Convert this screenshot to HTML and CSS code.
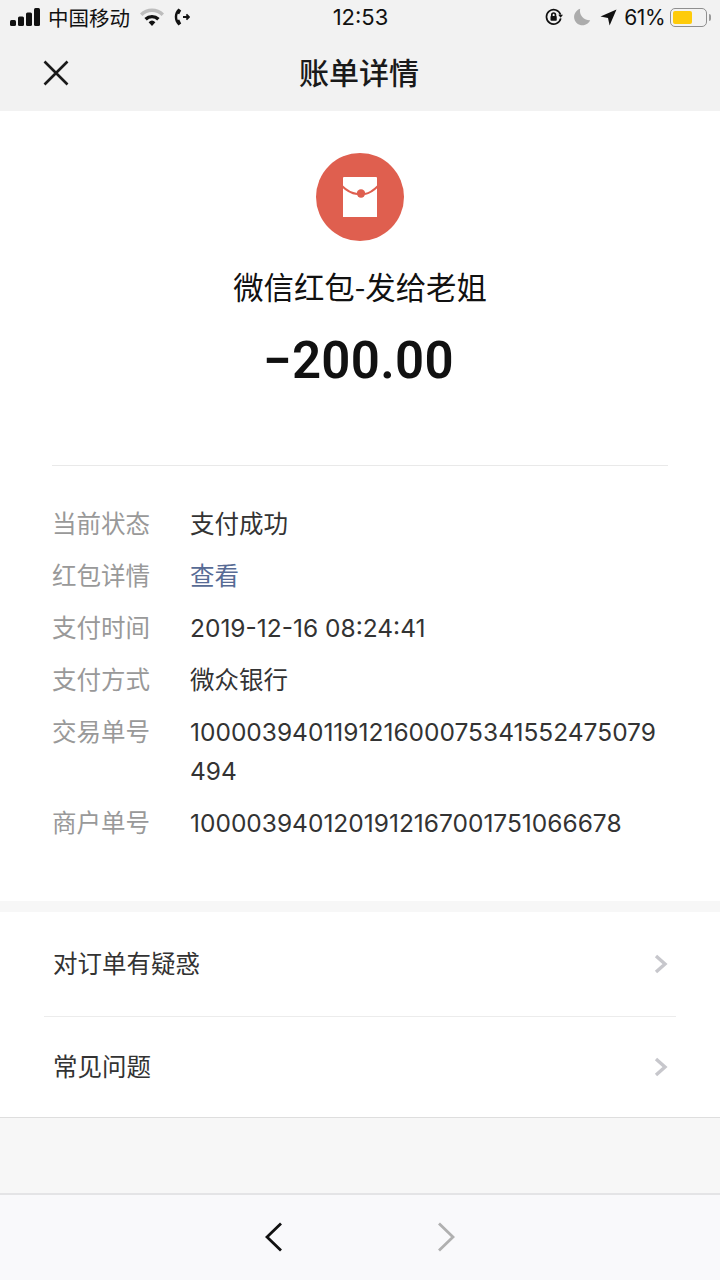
FILE: index.html
```html
<!DOCTYPE html>
<html lang="zh-CN">
<head>
    <meta charset="UTF-8">
    <meta name="viewport" content="width=device-width, initial-scale=1.0">
    <title>账单详情</title>
    <link rel="stylesheet" href="styles.css">
</head>
<body>
    <div class="page">
        <header class="top">
            <div class="status">
                <div class="status-side">
                    <svg class="signal" width="30" height="18" viewBox="0 0 30 18">
                        <rect x="0" y="12" width="6" height="6" rx="1.5"/>
                        <rect x="8" y="8.5" width="6" height="9.5" rx="1.5"/>
                        <rect x="16" y="4.5" width="6" height="13.5" rx="1.5"/>
                        <rect x="24" y="0" width="6" height="18" rx="1.5"/>
                    </svg>
                    <span class="carrier">中国移动</span>
                    <svg class="wifi" width="26" height="20" viewBox="0 0 26 20">
                        <path d="M1 6.5 A17 17 0 0 1 25 6.5 L22.6 9 A13.6 13.6 0 0 0 3.4 9 Z" fill="#bdbdbd"/>
                        <path d="M5.4 11 A11 11 0 0 1 20.6 11 L18.2 13.4 A7.6 7.6 0 0 0 7.8 13.4 Z"/>
                        <path d="M9.6 15.2 A5 5 0 0 1 16.4 15.2 L13 19 Z"/>
                    </svg>
                    <svg class="call" width="16" height="18" viewBox="0 0 16 18">
                        <path d="M4.5 0.5 C-0.5 4.5 -0.5 13 4.5 17.5 L7.2 15.4 L5.2 11.6 L3.8 12 C3 10 3 7.5 3.8 5.8 L5.2 6.2 L7.2 2.6 Z"/>
                        <path class="call-arrow" d="M9 9 H15 M12.4 6.4 L15 9 L12.4 11.6"/>
                    </svg>
                </div>
                <span class="clock">12:53</span>
                <div class="status-side status-right">
                    <svg width="18" height="18" viewBox="0 0 19 19">
                        <path class="lock-ring" d="M16.4 7 A7.6 7.6 0 1 0 16.6 11"/>
                        <path d="M14 7 H19 L16.5 10.2 Z"/>
                        <rect x="5.8" y="8.4" width="6.6" height="5" rx="0.8"/>
                        <path class="lock-loop" d="M7.2 8.6 V7.2 A1.9 1.9 0 0 1 11 7.2 V8.6"/>
                    </svg>
                    <svg class="moon" width="18" height="18" viewBox="0 0 18 18">
                        <path d="M7.2 0.8 A8.4 8.4 0 1 0 17.2 12.2 A9.4 9.4 0 0 1 7.2 0.8 Z" fill="#acacac"/>
                    </svg>
                    <svg class="arrow" width="17" height="17" viewBox="0 0 17 17">
                        <path d="M16.5 0.5 L0.5 7.6 L8 9 L9.6 16.5 Z"/>
                    </svg>
                    <span class="percent">61%</span>
                    <div class="battery">
                        <div class="battery-body"><div class="battery-fill"></div></div>
                        <div class="battery-cap"></div>
                    </div>
                </div>
            </div>
            <div class="nav">
                <svg class="close" width="26" height="26" viewBox="0 0 26 26">
                    <path d="M1.5 1.5 L24.5 24.5 M24.5 1.5 L1.5 24.5"/>
                </svg>
                <h1>账单详情</h1>
            </div>
        </header>

        <main>
            <section class="summary">
                <svg class="packet" width="88" height="88" viewBox="0 0 88 88">
                    <circle cx="44" cy="44" r="44" fill="#df5f4f"/>
                    <path d="M28 24 H60 Q61 24 61 25 V64 H27 V25 Q27 24 28 24 Z" fill="#fff"/>
                    <path d="M26 33 Q33 40 41 41 M49 41 Q55 40 62 33" fill="none" stroke="#df5f4f" stroke-width="2"/>
                    <circle cx="45" cy="40.5" r="4.2" fill="#df5f4f"/>
                </svg>
                <div class="title">微信红包-发给老姐</div>
                <div class="amount">−200.00</div>
            </section>

            <section class="details">
                <div class="row"><span class="label">当前状态</span><span class="value">支付成功</span></div>
                <div class="row"><span class="label">红包详情</span><span class="value link">查看</span></div>
                <div class="row"><span class="label">支付时间</span><span class="value">2019-12-16 08:24:41</span></div>
                <div class="row"><span class="label">支付方式</span><span class="value">微众银行</span></div>
                <div class="row"><span class="label">交易单号</span><span class="value">100003940119121600075341552475079494</span></div>
                <div class="row"><span class="label">商户单号</span><span class="value">1000039401201912167001751066678</span></div>
            </section>

            <div class="spacer"></div>

            <section class="links">
                <div class="link-row">
                    <span>对订单有疑惑</span>
                    <svg class="chevron" width="14" height="20" viewBox="0 0 14 20"><path d="M2 2 L11 10 L2 18"/></svg>
                </div>
                <div class="link-row">
                    <span>常见问题</span>
                    <svg class="chevron" width="14" height="20" viewBox="0 0 14 20"><path d="M2 2 L11 10 L2 18"/></svg>
                </div>
            </section>
        </main>

        <div class="fill"></div>

        <footer class="toolbar">
            <svg class="back" width="18" height="30" viewBox="0 0 18 30"><path d="M16 1.5 L2 15 L16 28.5"/></svg>
            <svg class="forward" width="18" height="30" viewBox="0 0 18 30"><path d="M2 1.5 L16 15 L2 28.5"/></svg>
        </footer>
    </div>
</body>
</html>
```
FILE: styles.css
```css
* {
    box-sizing: border-box;
}
body {
    margin: 0;
    background-color: #fff;
    font-family: "Liberation Sans", "Noto Sans CJK SC", sans-serif;
    color: #333;
}
.page {
    width: 720px;
    height: 1280px;
    display: flex;
    flex-direction: column;
    overflow: hidden;
}
.top {
    height: 111px;
    background-color: #f2f2f2;
    flex-shrink: 0;
}
.status {
    height: 34px;
    padding: 0 9px 0 10px;
    display: grid;
    grid-template-columns: 1fr auto 1fr;
    align-items: center;
    font-family: Inter, "Noto Sans CJK SC", sans-serif;
    font-size: 22px;
    color: #111;
}
.status-side {
    display: flex;
    align-items: center;
}
.status-right {
    justify-content: flex-end;
}
.status svg {
    fill: #111;
    display: block;
}
.carrier {
    margin-left: 8px;
    font-size: 20.5px;
    font-family: "Noto Sans CJK SC", sans-serif;
}
.wifi {
    margin-left: 9px;
}
.call {
    margin-left: 9px;
}
.call-arrow,
.lock-ring,
.lock-loop {
    fill: none;
    stroke: #111;
    stroke-width: 1.8;
}
.moon {
    margin-left: 10px;
}
.arrow {
    margin-left: 9px;
}
.percent {
    margin-left: 7px;
    font-size: 21px;
    letter-spacing: -0.5px;
}
.battery {
    margin-left: 5px;
    display: flex;
    align-items: center;
}
.battery-body {
    width: 37px;
    height: 19px;
    padding: 2px;
    border: 1.5px solid #8f8f8f;
    border-radius: 5px;
}
.battery-fill {
    width: 19px;
    height: 100%;
    background-color: #fecb0a;
    border-radius: 2px;
}
.battery-cap {
    width: 2px;
    height: 7px;
    margin-left: 2px;
    background-color: #9a9a9a;
    border-radius: 0 2px 2px 0;
}
.nav {
    height: 77px;
    display: flex;
    align-items: center;
    justify-content: center;
    position: relative;
    padding-bottom: 4px;
}
.close {
    position: absolute;
    left: 43px;
    top: 26px;
    fill: none;
    stroke: #1a1a1a;
    stroke-width: 2.6;
}
h1 {
    margin: 0 0 0 -2px;
    font-size: 30px;
    font-weight: 500;
    color: #1a1a1a;
    font-family: "Noto Sans CJK SC", sans-serif;
}
.summary {
    margin: 0 52px;
    height: 355px;
    padding-top: 42px;
    border-bottom: 1px solid #e9e9e9;
    display: flex;
    flex-direction: column;
    align-items: center;
}
.packet {
    display: block;
}
.title {
    margin-top: 24px;
    font-size: 30.4px;
    line-height: 42px;
    color: #111;
    font-family: "Noto Sans CJK SC", sans-serif;
}
.amount {
    margin-top: 22px;
    margin-right: 3px;
    font-size: 51px;
    line-height: 64px;
    font-weight: 600;
    letter-spacing: 0.3px;
    color: #111;
    font-family: Roboto, sans-serif;
}
.details {
    padding: 37px 52px 0;
    height: 435px;
    font-size: 24.5px;
    font-family: "Noto Sans CJK SC", sans-serif;
}
.row {
    display: flex;
    align-items: baseline;
    margin-bottom: 11px;
    line-height: 39px;
}
.label {
    width: 138px;
    flex-shrink: 0;
    color: #999;
}
.value {
    width: 470px;
    color: #333;
    word-break: break-all;
    font-size: 24.5px;
    font-family: Inter, "Noto Sans CJK SC", sans-serif;
}
.link {
    color: #576b95;
}
.spacer {
    height: 11px;
    background-color: #f7f7f7;
}
.links {
    border-bottom: 1px solid #dedede;
}
.link-row {
    height: 104px;
    margin: 0 44px;
    padding: 0 8px 0 9px;
    display: flex;
    align-items: center;
    justify-content: space-between;
    font-size: 24.5px;
    color: #333;
    font-family: "Noto Sans CJK SC", sans-serif;
}
.link-row span {
    margin-bottom: 4px;
}
.link-row + .link-row {
    height: 101px;
    border-top: 1px solid #ececec;
}
.chevron {
    fill: none;
    stroke: #c7c7cc;
    stroke-width: 3.4;
}
.fill {
    flex: 1;
    background-color: #f7f7f7;
}
.toolbar {
    height: 87px;
    flex-shrink: 0;
    background-color: #f9f9fb;
    border-top: 2px solid #e4e4e6;
    padding-bottom: 2px;
    display: flex;
    justify-content: center;
    gap: 154px;
    align-items: center;
}
.back,
.forward {
    fill: none;
    stroke-width: 2.8;
}
.back {
    stroke: #111;
}
.forward {
    stroke: #b0b0b0;
}
```
